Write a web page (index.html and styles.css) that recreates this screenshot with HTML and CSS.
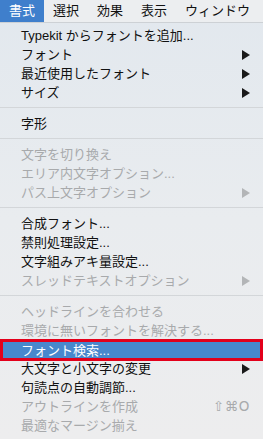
FILE: index.html
```html
<!DOCTYPE html>
<html lang="ja">
<head>
    <meta charset="UTF-8">
    <meta name="viewport" content="width=device-width, initial-scale=1.0">
    <title>書式メニュー</title>
    <link rel="stylesheet" href="styles.css">
</head>
<body>
    <div class="menubar">
        <span class="bar-item active">書式</span>
        <span class="bar-item">選択</span>
        <span class="bar-item">効果</span>
        <span class="bar-item">表示</span>
        <span class="bar-item">ウィンドウ</span>
    </div>

    <div class="menu">
        <div class="item">Typekit からフォントを追加...</div>
        <div class="item">フォント<span class="arrow"></span></div>
        <div class="item">最近使用したフォント<span class="arrow"></span></div>
        <div class="item">サイズ<span class="arrow"></span></div>

        <div class="sep"></div>
        <div class="item">字形</div>

        <div class="sep"></div>
        <div class="item off">文字を切り換え</div>
        <div class="item off">エリア内文字オプション...</div>
        <div class="item off">パス上文字オプション<span class="arrow"></span></div>

        <div class="sep"></div>
        <div class="item">合成フォント...</div>
        <div class="item">禁則処理設定...</div>
        <div class="item">文字組みアキ量設定...</div>
        <div class="item off">スレッドテキストオプション<span class="arrow"></span></div>

        <div class="sep"></div>
        <div class="item off">ヘッドラインを合わせる</div>
        <div class="item off">環境に無いフォントを解決する...</div>
        <div class="item selected">フォント検索...</div>
        <div class="item">大文字と小文字の変更<span class="arrow"></span></div>
        <div class="item">句読点の自動調節...</div>
        <div class="item off">アウトラインを作成<span class="shortcut">⇧⌘O</span></div>
        <div class="item off">最適なマージン揃え</div>
    </div>
</body>
</html>
```

FILE: styles.css
```css
body {
    margin: 0;
    width: 263px;
    height: 439px;
    overflow: hidden;
    font-family: "Liberation Sans", "Noto Sans CJK JP", sans-serif;
    font-size: 13px;
    color: #111;
    background: linear-gradient(180deg, #e2e8ee 0%, #e9ecef 50%, #ededee 100%);
}
.menubar {
    display: flex;
    height: 22px;
    line-height: 22px;
    background: #eceef0;
    border-bottom: 1px solid #cdd1d5;
}
.bar-item {
    padding: 0 9px;
}
.bar-item.active {
    background: #3f7fcc;
    color: #fff;
}
.menu {
    padding-top: 3px;
}
.item {
    display: flex;
    align-items: center;
    justify-content: space-between;
    height: 19px;
    line-height: 19px;
    padding: 0 13px 0 21px;
    white-space: nowrap;
}
.item.off {
    color: #a8aaac;
}
.item.selected {
    box-sizing: border-box;
    height: 22px;
    margin: -1px 0 -2px;
    padding-left: 18px;
    border: 3px solid #e3001b;
    background: #4888cd;
    color: #fff;
}
.arrow {
    width: 0;
    height: 0;
    border-left: 8px solid #1a1a1a;
    border-top: 5px solid transparent;
    border-bottom: 5px solid transparent;
}
.off .arrow {
    border-left-color: #b3b5b7;
}
.shortcut {
    font-family: "DejaVu Sans", sans-serif;
    font-size: 13.5px;
    letter-spacing: 0.5px;
}
.sep {
    height: 1px;
    margin: 5px 0 6px;
    background: #d3d6d9;
}
```
